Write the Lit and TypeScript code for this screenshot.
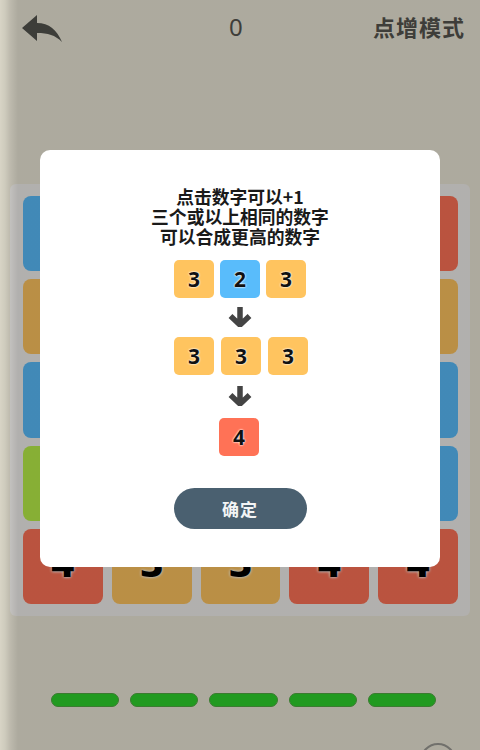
import { LitElement, html, css, svg } from "lit";
import { customElement } from "lit/decorators.js";

type Tone = "blue" | "red" | "orange" | "green";
const board: [number, Tone][][] = [
  [[2, "blue"], [3, "orange"], [2, "blue"], [1, "green"], [4, "red"]],
  [[3, "orange"], [2, "blue"], [1, "green"], [2, "blue"], [3, "orange"]],
  [[2, "blue"], [1, "green"], [3, "orange"], [4, "red"], [2, "blue"]],
  [[1, "green"], [4, "red"], [2, "blue"], [3, "orange"], [2, "blue"]],
  [[4, "red"], [3, "orange"], [3, "orange"], [4, "red"], [4, "red"]],
];

const arrow = svg`<path d="M12 0V17M2.5 9L12 18L21.5 9" fill="none" stroke="#444444" stroke-width="5.5" stroke-linejoin="miter"/>`;

@customElement("app-root")
export class AppRoot extends LitElement {
  static styles = css`
    :host {
      display: block;
      position: relative;
      width: 480px;
      height: 750px;
      overflow: hidden;
      font-family: "Noto Sans", "Noto Sans CJK SC", sans-serif;
      background: #ede9d9;
    }
    .page {
      display: flex;
      flex-direction: column;
      height: 750px;
      box-sizing: border-box;
    }
    .header {
      display: grid;
      grid-template-columns: 207px auto 1fr;
      align-items: center;
      height: 56px;
      padding: 0 15px 4px 22px;
      box-sizing: border-box;
      color: #55544e;
    }
    .back { display: block; width: 40px; height: 27px; margin-top: 4px; }
    .score { font-size: 24px; line-height: 1; font-weight: 400; padding-top: 1px; }
    .mode {
      justify-self: end;
      font-size: 22px;
      font-weight: 700;
      letter-spacing: 1px;
      font-family: "Noto Sans CJK SC", sans-serif;
    }
    .board {
      display: grid;
      grid-template-columns: repeat(5, 79.8px);
      grid-template-rows: repeat(5, 75.2px);
      gap: 8px 9px;
      justify-content: center;
      margin: 128px 10px 0;
      padding: 12px 0 12px 1px;
      background: #f3f1ee;
      border-radius: 6px;
    }
    .tile {
      display: flex;
      align-items: center;
      justify-content: center;
      box-sizing: border-box;
      padding-bottom: 10px;
      border-radius: 8px;
      font-size: 40px;
      font-weight: 800;
      color: #000;
      text-shadow: 0 0 3px #fff, 0 0 3px #fff;
    }
    .blue { background: #59bcfb; }
    .red { background: #ff7256; }
    .orange { background: #ffc45f; }
    .green { background: #b9f048; }
    .bars {
      display: flex;
      gap: 11px;
      justify-content: center;
      margin: 77px 0 0 7px;
    }
    .bar {
      width: 68.4px;
      height: 14px;
      box-sizing: border-box;
      background: #2dd32c;
      border: 1.5px solid #50a942;
      border-radius: 7px;
    }
    .help {
      position: absolute;
      left: 420px;
      top: 743px;
      width: 36px;
      height: 36px;
      box-sizing: border-box;
      border: 2px solid #9b9a94;
      border-radius: 50%;
    }
    .overlay {
      position: absolute;
      inset: 0;
      background: linear-gradient(90deg, rgba(0, 0, 0, 0.09) 0, rgba(0, 0, 0, 0.13) 5px, rgba(0, 0, 0, 0.2) 10px, rgba(0, 0, 0, 0.27) 18px);
      display: flex;
      justify-content: center;
      align-items: flex-start;
      padding-top: 150px;
    }
    .modal {
      display: flex;
      flex-direction: column;
      align-items: center;
      width: 400px;
      height: 417px;
      box-sizing: border-box;
      padding-top: 36px;
      background: #fff;
      border-radius: 10px;
    }
    .msg {
      font-family: "Noto Sans CJK SC", sans-serif;
      font-size: 17.8px;
      line-height: 20px;
      font-weight: 700;
      color: #1a1a1a;
      text-align: center;
    }
    .row {
      display: flex;
      justify-content: center;
      gap: 6px;
    }
    .row.first { margin-top: 14px; }
    .row.wide { gap: 7px; margin-left: 2px; }
    .row.single { margin-right: 2px; }
    .mini {
      display: flex;
      align-items: center;
      justify-content: center;
      width: 40px;
      height: 38px;
      border-radius: 5px;
      font-size: 21px;
      font-weight: 700;
      color: #111;
      text-shadow: 0 0 2px #fff, 0 0 2px #fff;
    }
    .down { display: block; width: 24px; height: 20px; margin: 9px 0 10px; }
    .down.second { margin: 11px 0 12px; }
    .confirm {
      margin-top: 32px;
      width: 133px;
      height: 41px;
      border: 0;
      border-radius: 21px;
      background: #4a6070;
      color: #f2f4f5;
      font-family: "Noto Sans CJK SC", sans-serif;
      font-size: 17px;
      font-weight: 700;
      letter-spacing: 1px;
    }
  `;

  private mini(n: number, tone: Tone) {
    return html`<div class="mini ${tone}">${n}</div>`;
  }

  render() {
    return html`
      <div class="page">
        <div class="header">
          <svg class="back" viewBox="0 0 40 27">
            <path d="M0 13L15 0V8C27 8 35 15 40 27C33 20 26 18 15 18V26Z" fill="#53544e"/>
          </svg>
          <div class="score">0</div>
          <div class="mode">点增模式</div>
        </div>
        <div class="board">
          ${board.flat().map(([n, tone]) => html`<div class="tile ${tone}">${n}</div>`)}
        </div>
        <div class="bars">
          ${[0, 1, 2, 3, 4].map(() => html`<div class="bar"></div>`)}
        </div>
      </div>
      <div class="help"></div>
      <div class="overlay">
        <div class="modal">
          <div class="msg">点击数字可以+1<br />三个或以上相同的数字<br />可以合成更高的数字</div>
          <div class="row first">
            ${this.mini(3, "orange")}${this.mini(2, "blue")}${this.mini(3, "orange")}
          </div>
          <svg class="down" viewBox="0 0 24 20">${arrow}</svg>
          <div class="row wide">
            ${this.mini(3, "orange")}${this.mini(3, "orange")}${this.mini(3, "orange")}
          </div>
          <svg class="down second" viewBox="0 0 24 20">${arrow}</svg>
          <div class="row single">${this.mini(4, "red")}</div>
          <button class="confirm">确定</button>
        </div>
      </div>
    `;
  }
}
